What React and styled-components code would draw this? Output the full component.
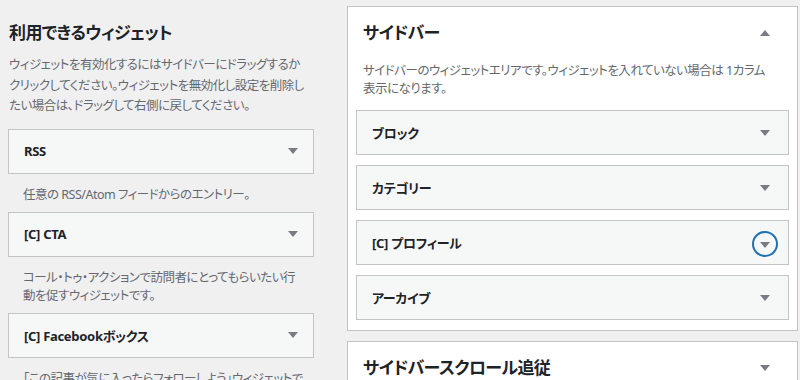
import React from "react";
import styled, { createGlobalStyle } from "styled-components";

const Global = createGlobalStyle`
  html, body { margin: 0; padding: 0; background: #f0f0f1; }
  body {
    font-family: "Noto Sans", "Noto Sans CJK JP", sans-serif;
    font-feature-settings: "palt";
    color: #1d2327;
    width: 800px;
    height: 380px;
    overflow: hidden;
  }
`;

const Page = styled.div`
  display: flex;
  align-items: flex-start;
  gap: 33px;
  padding: 0 0 0 8px;
`;

const LeftColumn = styled.div`
  width: 306px;
  flex: none;
  padding-top: 21px;
`;

const RightColumn = styled.div`
  width: 451px;
  flex: none;
  padding-top: 6px;
  display: flex;
  flex-direction: column;
  gap: 10px;
`;

const Heading = styled.h2`
  margin: 0;
  padding-left: ${(p) => p.$indent || 0}px;
  font-size: 17px;
  line-height: 24px;
  font-weight: 700;
  letter-spacing: -0.6px;
  color: #1d2327;
  white-space: nowrap;
`;

const Intro = styled.p`
  margin: 10px 0 12px 1px;
  font-size: 12.5px;
  letter-spacing: -0.5px;
  line-height: 20.5px;
  color: #646970;
  white-space: nowrap;
`;

const WidgetBox = styled.div`
  box-sizing: border-box;
  height: 45px;
  border: 1px solid #c3c4c7;
  background: #f6f7f7;
  display: flex;
  align-items: center;
  justify-content: space-between;
  padding: 0 ${(p) => p.$padRight || 15}px 0 15px;
`;

const WidgetTitle = styled.span`
  font-size: 13px;
  font-weight: 700;
  letter-spacing: -0.3px;
  color: #1d2327;
`;

const Arrow = styled.span`
  width: 0;
  height: 0;
  border-left: 5px solid transparent;
  border-right: 5px solid transparent;
  ${(p) =>
    p.$up
      ? "border-bottom: 6px solid #787c82;"
      : "border-top: 6px solid #787c82;"}
`;

const FocusRing = styled.span`
  box-sizing: border-box;
  width: 26px;
  height: 26px;
  border: 2px solid #2271b1;
  border-radius: 50%;
  display: flex;
  align-items: center;
  justify-content: center;
  margin-right: -8px;
  margin-top: 3px;
  padding-top: 1px;
`;

const WidgetDesc = styled.p`
  margin: 0;
  padding: 12px 15px 8px 15px;
  font-size: 12.5px;
  letter-spacing: -0.5px;
  line-height: 18px;
  color: #646970;
  white-space: nowrap;
`;

const Panel = styled.div`
  box-sizing: border-box;
  border: 1px solid #c3c4c7;
  background: #fff;
  padding-bottom: ${(p) => p.$padBottom || 0}px;
`;

const PanelHeader = styled.div`
  display: flex;
  align-items: center;
  justify-content: space-between;
  padding: 14px 27px 0 15px;
`;

const PanelDesc = styled.p`
  margin: 17px 15px 12px 15px;
  font-size: 12.5px;
  letter-spacing: -0.5px;
  line-height: 18px;
  color: #646970;
  white-space: nowrap;
`;

const WidgetList = styled.div`
  display: flex;
  flex-direction: column;
  gap: 10px;
  padding: 0 8px;
`;

const available = [
  { title: "RSS", desc: ["任意の RSS/Atom フィードからのエントリー。"] },
  {
    title: "[C] CTA",
    desc: ["コール・トゥ・アクションで訪問者にとってもらいたい行", "動を促すウィジェットです。"],
  },
  {
    title: "[C] Facebookボックス",
    desc: ["「この記事が気に入ったらフォローしよう」ウィジェットで", "す。"],
  },
];

const sidebarWidgets = ["ブロック", "カテゴリー", "[C] プロフィール", "アーカイブ"];

function Lines({ lines }) {
  return lines.map((l, i) => (
    <React.Fragment key={i}>
      {i > 0 && <br />}
      {l}
    </React.Fragment>
  ));
}

export default function App() {
  return (
    <>
      <Global />
      <Page>
        <LeftColumn>
          <Heading $indent={1}>利用できるウィジェット</Heading>
          <Intro>
            <Lines
              lines={[
                "ウィジェットを有効化するにはサイドバーにドラッグするか",
                "クリックしてください。ウィジェットを無効化し設定を削除し",
                "たい場合は、ドラッグして右側に戻してください。",
              ]}
            />
          </Intro>
          {available.map((w) => (
            <div key={w.title}>
              <WidgetBox>
                <WidgetTitle>{w.title}</WidgetTitle>
                <Arrow />
              </WidgetBox>
              <WidgetDesc>
                <Lines lines={w.desc} />
              </WidgetDesc>
            </div>
          ))}
        </LeftColumn>
        <RightColumn>
          <Panel $padBottom={10}>
            <PanelHeader>
              <Heading>サイドバー</Heading>
              <Arrow $up />
            </PanelHeader>
            <PanelDesc>
              <Lines
                lines={[
                  "サイドバーのウィジェットエリアです。ウィジェットを入れていない場合は 1カラム",
                  "表示になります。",
                ]}
              />
            </PanelDesc>
            <WidgetList>
              {sidebarWidgets.map((t) => (
                <WidgetBox key={t} $padRight={18}>
                  <WidgetTitle>{t}</WidgetTitle>
                  {t === "[C] プロフィール" ? (
                    <FocusRing>
                      <Arrow />
                    </FocusRing>
                  ) : (
                    <Arrow />
                  )}
                </WidgetBox>
              ))}
            </WidgetList>
          </Panel>
          <Panel $padBottom={20}>
            <PanelHeader>
              <Heading>サイドバースクロール追従</Heading>
              <Arrow />
            </PanelHeader>
          </Panel>
        </RightColumn>
      </Page>
    </>
  );
}
